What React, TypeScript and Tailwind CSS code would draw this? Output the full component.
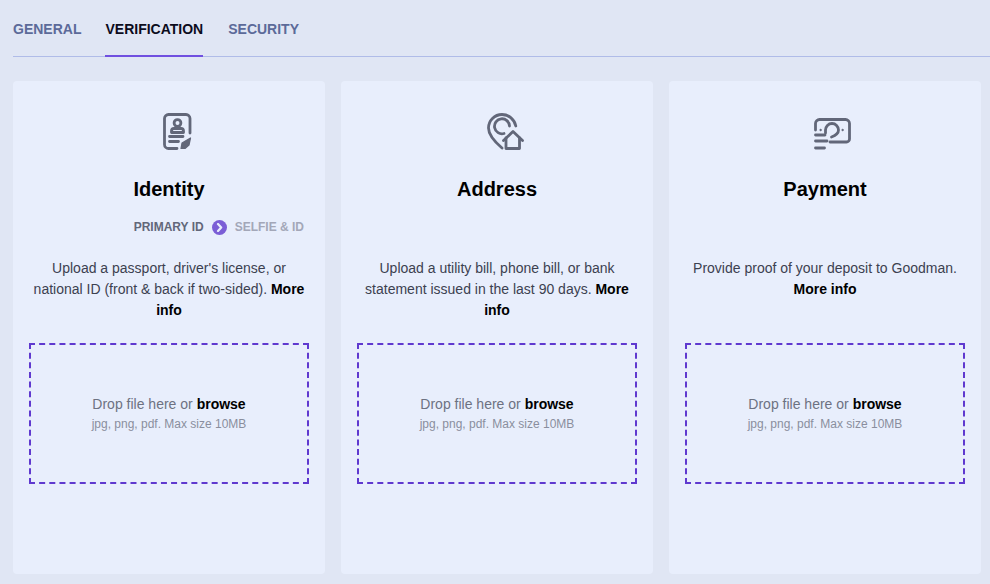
function IdIcon() {
  return (
    <svg width="38" height="38" viewBox="0 0 38 38" fill="none" stroke="#626779" strokeWidth="2.800" strokeLinecap="round" strokeLinejoin="round">
      <g transform="translate(5 0)">
        <path d="M14 35.500H5.500a4 4 0 0 1-4-4V5.500a4 4 0 0 1 4-4h17.500a4 4 0 0 1 4 4V20" />
        <circle cx="14.500" cy="10" r="3.400" />
        <path d="M8.500 19.500v-1.500a2.500 2.500 0 0 1 2.500-2.500h7a2.500 2.500 0 0 1 2.500 2.500v1.500Z" />
        <path d="M6.500 23.500h13.500M6.500 28.500h9" />
        <path d="M18 35.500l1-5.500 8.500-5-1.500 7-4 3.500Z" fill="#626779" strokeWidth="1.200" />
      </g>
    </svg>
  );
}

function PinIcon() {
  return (
    <svg width="38" height="38" viewBox="0 0 38 38" fill="none" stroke="#626779" strokeWidth="2.800" strokeLinecap="round" strokeLinejoin="round">
      <g transform="translate(1 0)">
        <path d="M15 35C8 29 1.500 22 1.500 15A13.500 13.500 0 0 1 15 1.500C22 1.500 27.500 6.500 28.800 13" />
        <path d="M17 20.500A7.500 7.500 0 1 1 22.500 13" />
        <path d="M16.500 27.500 26 18.500l9.500 9" />
        <path d="M19 25v10.500h13.500V25" />
      </g>
    </svg>
  );
}

function MoneyIcon() {
  return (
    <svg width="38" height="38" viewBox="0 0 38 38" fill="none" stroke="#626779" strokeWidth="2.800" strokeLinecap="round" strokeLinejoin="round">
      <g transform="translate(0 5)">
        <path d="M1.500 12V5.500a4 4 0 0 1 4-4h26a4 4 0 0 1 4 4v15.500a3 3 0 0 1-3 3H16" />
        <path d="M11.500 15v-3a6.500 6.500 0 0 1 13 0c0 3.500-3 5.500-7 7" />
        <path d="M1.500 17h9.500M1.500 23h11.500M1.500 30h9" />
        <circle cx="6.500" cy="12" r=".7" fill="#626779" strokeWidth="1" />
        <circle cx="28.500" cy="12" r=".7" fill="#626779" strokeWidth="1" />
      </g>
    </svg>
  );
}

function Card({ icon, title, steps, text, more }: { icon: React.ReactNode; title: string; steps?: boolean; text: React.ReactNode; more: React.ReactNode }) {
  return (
    <div className="w-[312px] h-[493px] rounded-[4px] bg-[#e8eefc] px-4 flex flex-col shrink-0">
      <div className="h-[38px] mt-[32px] pl-[16px] flex items-center justify-center">{icon}</div>
      <h2 className="mt-[26px] h-[24px] text-center text-[20px] leading-[24px] font-bold text-black">{title}</h2>
      <div className="mt-[19px] h-[14px] flex items-center justify-end pr-[5px] text-[12px] leading-[14px] font-bold">
        {steps && (
          <>
            <span className="text-[#626779]">PRIMARY ID</span>
            <span className="ml-[8px] w-[15px] h-[15px] rounded-full bg-[#7b5ed6] flex items-center justify-center">
              <svg width="9" height="9" viewBox="0 0 9 9" fill="none" stroke="#e8eefc" strokeWidth="2.200" strokeLinecap="round" strokeLinejoin="round">
                <path d="M3 1l3.200 3.500L3 8" />
              </svg>
            </span>
            <span className="ml-[8px] text-[#a3a7b8]">SELFIE &amp; ID</span>
          </>
        )}
      </div>
      <p className="mt-[24px] h-[63px] text-center text-[14px] leading-[21px] text-[#3c4150]">
        {text} <b className="text-black">{more}</b>
      </p>
      <div className="mt-[22px] h-[141px] border-2 border-dashed border-[#5f39cf] flex flex-col items-center justify-center">
        <div className="text-[14px] leading-[20px] text-[#6d7282]">
          Drop file here or <b className="text-black">browse</b>
        </div>
        <div className="mt-px text-[12px] leading-[18px] text-[#8a8e9e]">jpg, png, pdf. Max size 10MB</div>
      </div>
    </div>
  );
}

export default function App() {
  return (
    <div className="w-[990px] h-[584px] overflow-hidden bg-[#e0e6f4] pl-[13px] font-['Liberation_Sans',Arial,sans-serif]">
      <div className="h-[57px] flex border-b border-[#b0bce8] gap-[24px] text-[14px] font-bold uppercase">
        <div className="h-[57px] pt-[21px] leading-[16px] text-[#5c6a99]">General</div>
        <div className="h-[57px] pt-[21px] leading-[16px] text-[#0c0c1c] border-b-2 border-[#7050e0]">Verification</div>
        <div className="ml-px h-[57px] pt-[21px] leading-[16px] text-[#5c6a99]">Security</div>
      </div>
      <div className="mt-[24px] flex gap-[16px]">
        <Card icon={<IdIcon />} title="Identity" steps text="Upload a passport, driver's license, or national ID (front & back if two-sided)." more="More info" />
        <Card icon={<PinIcon />} title="Address" text="Upload a utility bill, phone bill, or bank statement issued in the last 90 days." more="More info" />
        <Card icon={<MoneyIcon />} title="Payment" text="Provide proof of your deposit to Goodman." more="More info" />
      </div>
    </div>
  );
}
